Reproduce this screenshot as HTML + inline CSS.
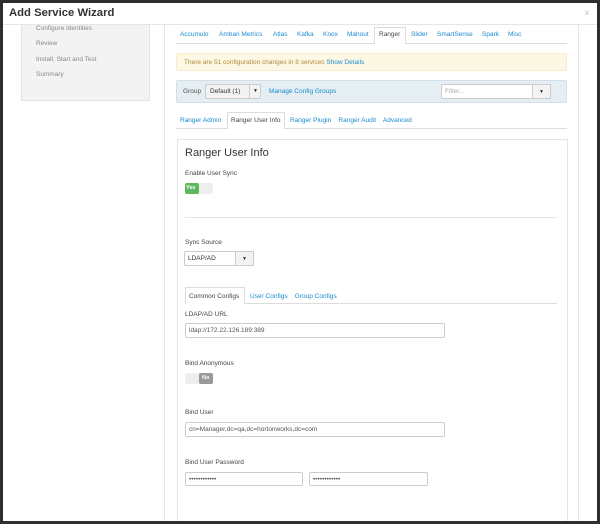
<!DOCTYPE html><html><head><style>
*{box-sizing:border-box;margin:0;padding:0}
body{width:600px;height:524px;background:#2e2e2e;font-family:"Liberation Sans",sans-serif;position:relative;overflow:hidden;font-size:7px;color:#333}
.a{position:absolute}
.m{left:3px;top:3px;width:594px;height:518px;background:#fff;overflow:hidden}
.lnk{color:#1a8ad0}
.t{position:absolute;top:31px;font-size:6.5px;color:#1a8ad0;white-space:nowrap}
.inp{background:#fff;border:1px solid #ccc;border-radius:2px;font-size:6.5px;padding-left:3px;display:flex;align-items:center;color:#555}
.lbl{font-size:6.5px;color:#444}
</style></head><body>
<div class="a m">
<div class="a" style="left:174px;top:136px;width:391px;height:400px;border:1px solid #e5e5e5"></div>
</div>
<div class="a" style="left:9px;top:7px;font-size:11.3px;font-weight:bold;color:#333">Add Service Wizard</div>
<div class="a" style="left:585px;top:8px;font-size:8px;color:#bbb">x</div>
<div class="a" style="left:3px;top:24px;width:594px;height:1px;background:#e5e5e5"></div>
<div class="a" style="left:21px;top:25px;width:129px;height:76px;background:#f3f3f3;border:1px solid #e3e3e3;border-top:none"></div>
<div class="a" style="left:36px;top:21px;font-size:6.5px;color:#888;line-height:15.3px">Configure Identities<br>Review<br>Install, Start and Test<br>Summary</div>
<div class="a" style="left:164px;top:25px;width:1px;height:496px;background:#e5e5e5"></div>
<div class="a" style="left:578px;top:25px;width:1px;height:496px;background:#e5e5e5"></div>
<div class="a" style="left:176px;top:43px;width:391px;height:1px;background:#ddd"></div>
<div class="a" style="left:374px;top:27px;width:32px;height:17px;background:#fff;border:1px solid #ddd;border-bottom:none"></div>
<div class="t" style="left:180px">Accumulo</div>
<div class="t" style="left:219px">Ambari Metrics</div>
<div class="t" style="left:273px">Atlas</div>
<div class="t" style="left:297px">Kafka</div>
<div class="t" style="left:323px">Knox</div>
<div class="t" style="left:347px">Mahout</div>
<div class="t" style="left:379px;color:#444">Ranger</div>
<div class="t" style="left:411px">Slider</div>
<div class="t" style="left:437px">SmartSense</div>
<div class="t" style="left:482px">Spark</div>
<div class="t" style="left:508px">Misc</div>
<div class="a" style="left:176px;top:53px;width:391px;height:18px;background:#fcf8e3;border:1px solid #faebcc;border-radius:2px;font-size:6.5px;color:#b08a3e;padding:5px 7px">There are 51 configuration changes in 8 services <span class="lnk">Show Details</span></div>
<div class="a" style="left:176px;top:80px;width:391px;height:23px;background:#e4eef3;border:1px solid #d3e0e8;border-radius:2px"></div>
<div class="a" style="left:183px;top:88px;font-size:6.5px;color:#555">Group</div>
<div class="a" style="left:205px;top:84px;width:56px;height:15px;background:#f3f3f3;border:1px solid #ccc;border-radius:2px;font-size:6.5px;padding:3px 4px;color:#333">Default (1)</div>
<div class="a" style="left:249px;top:84px;width:1px;height:15px;background:#ccc"></div>
<div class="a" style="left:253px;top:88px;font-size:5px">▼</div>
<div class="a lnk" style="left:269px;top:88px;font-size:6.5px">Manage Config Groups</div>
<div class="a inp" style="left:441px;top:84px;width:110px;height:15px;color:#aaa">Filter...</div>
<div class="a" style="left:532px;top:84px;width:19px;height:15px;background:#f3f3f3;border:1px solid #ccc;font-size:5px;text-align:center;padding-top:4px">▼</div>
<div class="a" style="left:176px;top:128px;width:391px;height:1px;background:#ddd"></div>
<div class="a" style="left:227px;top:112px;width:58px;height:17px;background:#fff;border:1px solid #ddd;border-bottom:none"></div>
<div class="a lnk" style="left:180px;top:117px;font-size:6.5px">Ranger Admin</div>
<div class="a" style="left:231px;top:117px;font-size:6.5px;color:#444">Ranger User Info</div>
<div class="a lnk" style="left:290px;top:117px;font-size:6.5px">Ranger Plugin&nbsp;&nbsp;&nbsp; Ranger Audit&nbsp;&nbsp;&nbsp; Advanced</div>
<div class="a" style="left:185px;top:147px;font-size:11px;color:#333">Ranger User Info</div>
<div class="a lbl" style="left:185px;top:170px">Enable User Sync</div>
<div class="a" style="left:185px;top:183px;width:28px;height:11px;background:#eee;border-radius:2px"></div>
<div class="a" style="left:185px;top:183px;width:14px;height:11px;background:#5cb85c;border-radius:2px;color:#fff;font-size:5.5px;font-weight:bold;padding:2px 1px">Yes</div>
<div class="a" style="left:185px;top:217px;width:372px;height:1px;background:#e5e5e5"></div>
<div class="a lbl" style="left:185px;top:239px">Sync Source</div>
<div class="a inp" style="left:184px;top:251px;width:70px;height:15px;color:#333">LDAP/AD</div>
<div class="a" style="left:235px;top:251px;width:19px;height:15px;background:#f3f3f3;border:1px solid #ccc;font-size:5px;text-align:center;padding-top:4px">▼</div>
<div class="a" style="left:185px;top:303px;width:372px;height:1px;background:#ddd"></div>
<div class="a" style="left:185px;top:287px;width:60px;height:17px;background:#fff;border:1px solid #ddd;border-bottom:none"></div>
<div class="a" style="left:189px;top:293px;font-size:6.5px;color:#444">Common Configs</div>
<div class="a lnk" style="left:250px;top:293px;font-size:6.5px">User Configs&nbsp;&nbsp;&nbsp; Group Configs</div>
<div class="a lbl" style="left:185px;top:311px">LDAP/AD URL</div>
<div class="a inp" style="left:185px;top:323px;width:260px;height:15px">ldap://172.22.126.189:389</div>
<div class="a lbl" style="left:185px;top:360px">Bind Anonymous</div>
<div class="a" style="left:185px;top:373px;width:28px;height:11px;background:#eee;border-radius:2px"></div>
<div class="a" style="left:199px;top:373px;width:14px;height:11px;background:#999;border-radius:2px;color:#fff;font-size:5.5px;font-weight:bold;padding:2px 3px">No</div>
<div class="a lbl" style="left:185px;top:409px">Bind User</div>
<div class="a inp" style="left:185px;top:422px;width:260px;height:15px">cn=Manager,dc=qa,dc=hortonworks,dc=com</div>
<div class="a lbl" style="left:185px;top:459px">Bind User Password</div>
<div class="a inp" style="left:185px;top:472px;width:118px;height:14px">••••••••••••</div>
<div class="a inp" style="left:309px;top:472px;width:119px;height:14px">••••••••••••</div>
</body></html>
